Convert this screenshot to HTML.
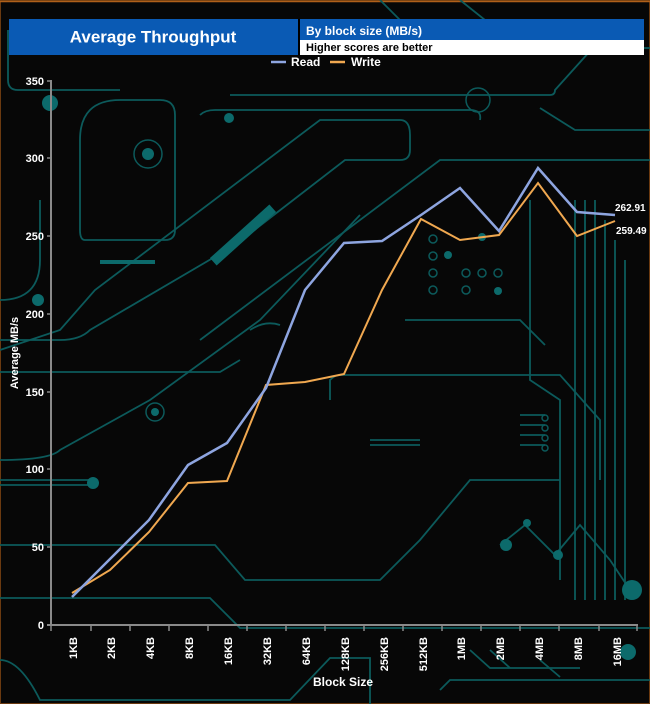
<!DOCTYPE html>
<html><head><style>
html,body{margin:0;padding:0;background:#070707;}
svg{display:block}
text{font-family:"Liberation Sans",sans-serif;font-weight:bold;fill:#fff}
</style></head><body>
<svg width="650" height="704" viewBox="0 0 650 704" xmlns="http://www.w3.org/2000/svg">
<rect width="650" height="704" fill="#070707"/>
<rect x="0.5" y="0.5" width="649" height="703" fill="none" stroke="#6b3a10" stroke-width="1"/>
<line x1="0" y1="1.5" x2="650" y2="1.5" stroke="#b0601a" stroke-width="1.5"/>
<g fill="none" stroke="#0c5a5b" stroke-width="1.8">
<path d="M8 30 V80 Q8 90 18 90 H120"/>
<path d="M230 95 H550 Q555 95 555 90 L600 40"/>
<path d="M380 0 L410 30"/>
<path d="M460 0 L510 40 Q520 48 540 48 H650"/>
<path d="M200 115 Q205 110 215 110 H470 Q482 110 480 120"/>
<path d="M540 108 L575 130 H650"/>
<path d="M0 300 Q40 300 40 260 V200"/>
<path d="M80 140 Q80 100 120 100 H160 Q175 100 175 115 V230 Q175 240 165 240 H85 Q80 240 80 230 Z"/>
<path d="M0 350 L60 330 L95 290 L320 120 H400 Q410 120 410 135 V150 Q410 160 400 160 H345 L235 245 L90 330 Q80 340 60 340 H0"/>
<path d="M200 340 L440 160 H650"/>
<path d="M0 372 H220 L240 360"/>
<path d="M0 460 Q50 460 60 450 L150 400 L260 320 L360 215"/>
<path d="M0 480 H90"/>
<path d="M0 485 H90"/>
<path d="M250 330 Q265 320 280 325"/>
<path d="M330 400 L330 380 Q335 375 340 375 H560 L600 420 V480"/>
<path d="M0 545 H215 L245 580 H380 L420 540 L470 480 H560"/>
<path d="M0 598 H210 L240 628 H650"/>
<path d="M0 660 Q20 660 40 700 H290 L330 658 H370 V704"/>
<path d="M440 690 L450 680 H650"/>
<path d="M470 650 L490 668 H580"/>
<path d="M490 650 L510 668"/>
<path d="M540 660 L560 677"/>
<path d="M500 545 L525 525 L555 555 L580 525 L610 560 L630 590"/>
<path d="M575 200 V600 M585 200 V600 M595 200 V600 M605 220 V600 M615 240 V600 M625 260 V600"/>
<path d="M530 200 V380 L560 400 V580"/>
<path d="M405 320 H520 L545 345"/>
<path d="M370 440 H420 M370 445 H420"/>
<path d="M520 415 H545 M520 425 H545 M520 435 H545 M520 445 H545"/>
</g>
<g fill="#0c6a6b">
<circle cx="50" cy="103" r="8"/><circle cx="229" cy="118" r="5"/><circle cx="148" cy="154" r="6"/>
<circle cx="38" cy="300" r="6"/><circle cx="93" cy="483" r="6"/><circle cx="632" cy="590" r="10"/>
<circle cx="628" cy="652" r="8"/><circle cx="506" cy="545" r="6"/><circle cx="558" cy="555" r="5"/><circle cx="527" cy="523" r="4"/>
<circle cx="448" cy="255" r="4"/><circle cx="482" cy="237" r="4"/><circle cx="498" cy="291" r="4"/><circle cx="155" cy="412" r="4"/>
<rect x="238" y="195" width="10" height="80" transform="rotate(48 243 235)"/>
<rect x="100" y="260" width="55" height="4"/>
</g>
<g fill="none" stroke="#0c5a5b" stroke-width="1.5">
<circle cx="433" cy="239" r="4"/><circle cx="433" cy="256" r="4"/><circle cx="433" cy="273" r="4"/><circle cx="433" cy="290" r="4"/>
<circle cx="466" cy="273" r="4"/><circle cx="466" cy="290" r="4"/><circle cx="482" cy="273" r="4"/><circle cx="498" cy="273" r="4"/>
<circle cx="148" cy="154" r="14"/><circle cx="478" cy="100" r="12"/><circle cx="155" cy="412" r="9"/>
<circle cx="545" cy="418" r="3"/><circle cx="545" cy="428" r="3"/><circle cx="545" cy="438" r="3"/><circle cx="545" cy="448" r="3"/>
</g>
<rect x="9" y="19" width="289" height="36" fill="#0a5ab4"/>
<text x="153" y="38" font-size="17" text-anchor="middle" dominant-baseline="middle">Average Throughput</text>
<rect x="300" y="19" width="344" height="21" fill="#0a5ab4"/>
<rect x="300" y="40" width="344" height="15" fill="#fff"/>
<rect x="298" y="19" width="2" height="36" fill="#000"/>
<text x="306" y="35" font-size="12">By block size (MB/s)</text>
<text x="306" y="51" font-size="11" style="fill:#000">Higher scores are better</text>
<line x1="271" y1="62" x2="286" y2="62" stroke="#8ea5e0" stroke-width="2.5"/>
<text x="291" y="66" font-size="12">Read</text>
<line x1="330" y1="62" x2="345" y2="62" stroke="#f0a850" stroke-width="2.5"/>
<text x="351" y="66" font-size="12">Write</text>
<g stroke="#8a8a8a" stroke-width="2">
<line x1="51" y1="80" x2="51" y2="626"/>
<line x1="47" y1="625" x2="638" y2="625"/>
</g>
<g stroke="#8a8a8a" stroke-width="1.5">
<line x1="47" y1="81" x2="51" y2="81"/><line x1="47" y1="158" x2="51" y2="158"/><line x1="47" y1="236" x2="51" y2="236"/><line x1="47" y1="314" x2="51" y2="314"/><line x1="47" y1="392" x2="51" y2="392"/><line x1="47" y1="469" x2="51" y2="469"/><line x1="47" y1="547" x2="51" y2="547"/>
<path d="M51 625v6M91 625v6M130 625v6M169 625v6M208 625v6M247 625v6M286 625v6M325 625v6M364 625v6M403 625v6M442 625v6M481 625v6M520 625v6M559 625v6M599 625v6M637 625v6"/>
</g>
<g font-size="11" text-anchor="end">
<text x="44" y="85">350</text><text x="44" y="162">300</text><text x="44" y="240">250</text><text x="44" y="318">200</text><text x="44" y="396">150</text><text x="44" y="473">100</text><text x="44" y="551">50</text><text x="44" y="629">0</text>
</g>
<text transform="translate(18 353) rotate(-90)" font-size="11" text-anchor="middle">Average MB/s</text>
<g font-size="11" text-anchor="end">
<text transform="translate(77 637) rotate(-90)">1KB</text>
<text transform="translate(115 637) rotate(-90)">2KB</text>
<text transform="translate(154 637) rotate(-90)">4KB</text>
<text transform="translate(193 637) rotate(-90)">8KB</text>
<text transform="translate(232 637) rotate(-90)">16KB</text>
<text transform="translate(271 637) rotate(-90)">32KB</text>
<text transform="translate(310 637) rotate(-90)">64KB</text>
<text transform="translate(349 637) rotate(-90)">128KB</text>
<text transform="translate(388 637) rotate(-90)">256KB</text>
<text transform="translate(427 637) rotate(-90)">512KB</text>
<text transform="translate(465 637) rotate(-90)">1MB</text>
<text transform="translate(504 637) rotate(-90)">2MB</text>
<text transform="translate(543 637) rotate(-90)">4MB</text>
<text transform="translate(582 637) rotate(-90)">8MB</text>
<text transform="translate(621 637) rotate(-90)">16MB</text>
</g>
<text x="343" y="686" font-size="12" text-anchor="middle">Block Size</text>
<polyline fill="none" stroke="#f0a850" stroke-width="2" points="72,593 110,570 149,532 188,483 227,481 266,385 305,382 344,374 382,290 421,219 460,240 499,235 538,183 577,236 615,221"/>
<polyline fill="none" stroke="#8ea5e0" stroke-width="2.5" points="72,597 110,559 149,520 188,465 227,443 266,388 305,290 344,243 382,241 421,215 460,188 499,231 538,168 577,212 615,215"/>
<text x="615" y="211" font-size="10">262.91</text>
<text x="616" y="234" font-size="10">259.49</text>
</svg>
</body></html>
